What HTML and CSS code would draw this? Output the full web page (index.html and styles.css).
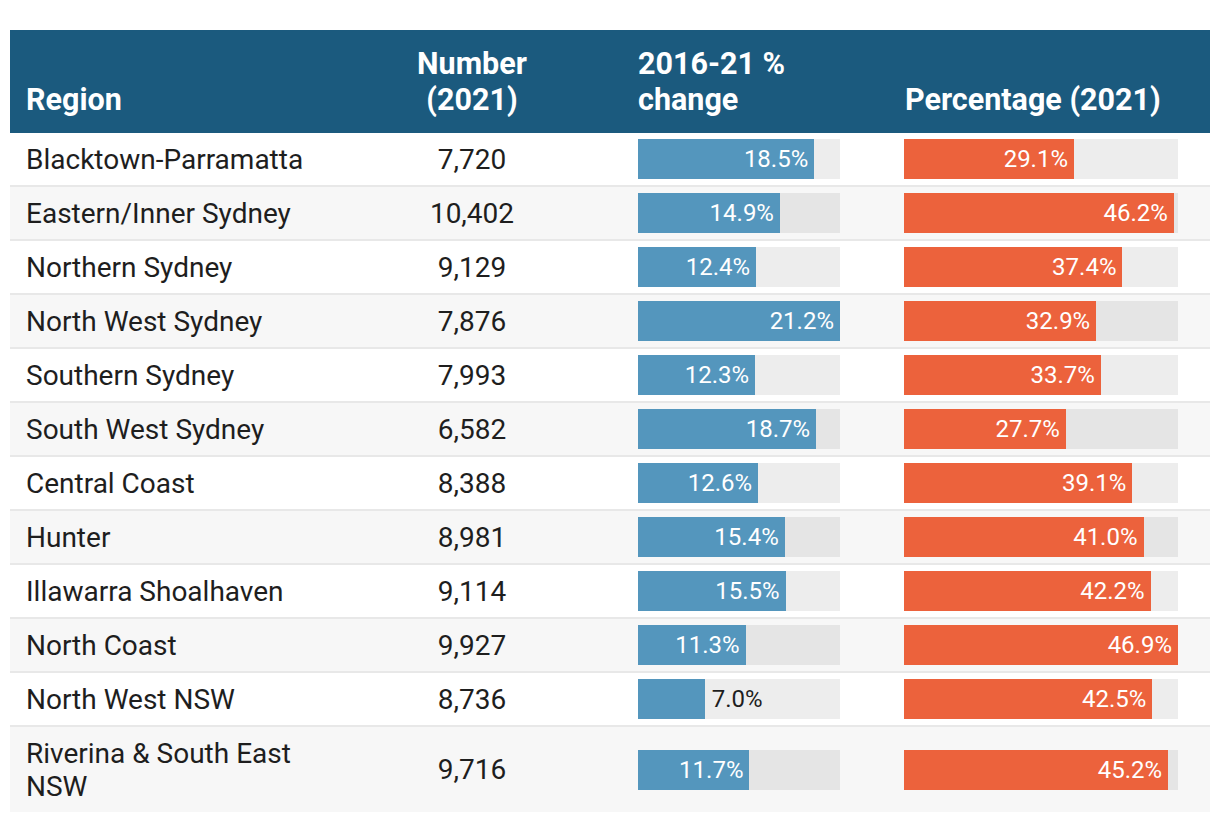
FILE: index.html
```html
<!DOCTYPE html>
<html lang="en">
<head>
<meta charset="utf-8">
<title>Regions</title>
<link rel="stylesheet" href="styles.css">
</head>
<body>
<div class="table">
  <div class="row head">
    <div class="cell region">Region</div>
    <div class="cell num">Number<br>(2021)</div>
    <div class="cell chg">2016-21 %<br>change</div>
    <div class="cell pct">Percentage (2021)</div>
  </div>

  <div class="row">
    <div class="cell region">Blacktown-Parramatta</div>
    <div class="cell num">7,720</div>
    <div class="cell chg"><div class="track"><div class="fill blue" style="width:87.26%">18.5%</div></div></div>
    <div class="cell pct"><div class="track"><div class="fill orange" style="width:62.05%">29.1%</div></div></div>
  </div>
  <div class="row">
    <div class="cell region">Eastern/Inner Sydney</div>
    <div class="cell num">10,402</div>
    <div class="cell chg"><div class="track"><div class="fill blue" style="width:70.28%">14.9%</div></div></div>
    <div class="cell pct"><div class="track"><div class="fill orange" style="width:98.51%">46.2%</div></div></div>
  </div>
  <div class="row">
    <div class="cell region">Northern Sydney</div>
    <div class="cell num">9,129</div>
    <div class="cell chg"><div class="track"><div class="fill blue" style="width:58.49%">12.4%</div></div></div>
    <div class="cell pct"><div class="track"><div class="fill orange" style="width:79.74%">37.4%</div></div></div>
  </div>
  <div class="row">
    <div class="cell region">North West Sydney</div>
    <div class="cell num">7,876</div>
    <div class="cell chg"><div class="track"><div class="fill blue" style="width:100%">21.2%</div></div></div>
    <div class="cell pct"><div class="track"><div class="fill orange" style="width:70.15%">32.9%</div></div></div>
  </div>
  <div class="row">
    <div class="cell region">Southern Sydney</div>
    <div class="cell num">7,993</div>
    <div class="cell chg"><div class="track"><div class="fill blue" style="width:58.02%">12.3%</div></div></div>
    <div class="cell pct"><div class="track"><div class="fill orange" style="width:71.86%">33.7%</div></div></div>
  </div>
  <div class="row">
    <div class="cell region">South West Sydney</div>
    <div class="cell num">6,582</div>
    <div class="cell chg"><div class="track"><div class="fill blue" style="width:88.21%">18.7%</div></div></div>
    <div class="cell pct"><div class="track"><div class="fill orange" style="width:59.06%">27.7%</div></div></div>
  </div>
  <div class="row">
    <div class="cell region">Central Coast</div>
    <div class="cell num">8,388</div>
    <div class="cell chg"><div class="track"><div class="fill blue" style="width:59.43%">12.6%</div></div></div>
    <div class="cell pct"><div class="track"><div class="fill orange" style="width:83.37%">39.1%</div></div></div>
  </div>
  <div class="row">
    <div class="cell region">Hunter</div>
    <div class="cell num">8,981</div>
    <div class="cell chg"><div class="track"><div class="fill blue" style="width:72.64%">15.4%</div></div></div>
    <div class="cell pct"><div class="track"><div class="fill orange" style="width:87.42%">41.0%</div></div></div>
  </div>
  <div class="row">
    <div class="cell region">Illawarra Shoalhaven</div>
    <div class="cell num">9,114</div>
    <div class="cell chg"><div class="track"><div class="fill blue" style="width:73.11%">15.5%</div></div></div>
    <div class="cell pct"><div class="track"><div class="fill orange" style="width:89.98%">42.2%</div></div></div>
  </div>
  <div class="row">
    <div class="cell region">North Coast</div>
    <div class="cell num">9,927</div>
    <div class="cell chg"><div class="track"><div class="fill blue" style="width:53.30%">11.3%</div></div></div>
    <div class="cell pct"><div class="track"><div class="fill orange" style="width:100%">46.9%</div></div></div>
  </div>
  <div class="row">
    <div class="cell region">North West NSW</div>
    <div class="cell num">8,736</div>
    <div class="cell chg"><div class="track"><div class="fill blue" style="width:33.02%"></div><span class="outside">7.0%</span></div></div>
    <div class="cell pct"><div class="track"><div class="fill orange" style="width:90.62%">42.5%</div></div></div>
  </div>
  <div class="row">
    <div class="cell region">Riverina &amp; South East NSW</div>
    <div class="cell num">9,716</div>
    <div class="cell chg"><div class="track"><div class="fill blue" style="width:55.19%">11.7%</div></div></div>
    <div class="cell pct"><div class="track"><div class="fill orange" style="width:96.38%">45.2%</div></div></div>
  </div>
</div>
</body>
</html>
```

FILE: styles.css
```css
html, body {
  margin: 0;
  padding: 0;
  background: #ffffff;
}

body {
  font-family: Roboto, "Liberation Sans", sans-serif;
  color: #1e1e1e;
}

.table {
  width: 1200px;
  margin: 30px 0 0 10px;
}

.row {
  display: grid;
  grid-template-columns: 340px 244px 278px 338px;
  align-items: center;
  border-bottom: 2px solid #e8e8e8;
}

.row:nth-child(odd) {
  background: #f7f7f7;
}

.row:last-child {
  border-bottom: none;
}

.row.head {
  background: #1b5a7e;
  color: #ffffff;
  font-weight: 700;
  align-items: end;
  padding: 16px 0 15px;
  border-bottom: none;
}

.cell {
  font-size: 28px;
  line-height: 33px;
  padding: 9.5px 0;
}

.head .cell {
  font-size: 30.5px;
  line-height: 36px;
  padding: 0;
}

.cell.region {
  padding-left: 16px;
  padding-right: 16px;
}

.cell.num {
  text-align: center;
}

.cell.chg {
  padding: 6px 0 6px 44px;
}

.cell.pct {
  padding: 6px 0 6px 32px;
}

.head .cell.chg {
  padding: 0 0 0 44px;
}

.head .cell.pct {
  padding: 0 0 0 33px;
}

.head .cell.region {
  padding-left: 16px;
}

.track {
  display: flex;
  align-items: center;
  height: 40px;
  background: rgba(0, 0, 0, 0.07);
  font-size: 24px;
  line-height: 40px;
}

.chg .track {
  width: 202px;
}

.pct .track {
  width: 274px;
}

.fill {
  height: 40px;
  box-sizing: border-box;
  text-align: right;
  padding-right: 6px;
  color: #ffffff;
  white-space: nowrap;
}

.fill.blue {
  background: #5496bd;
}

.fill.orange {
  background: #ec623c;
}

.outside {
  margin-left: 7px;
  color: #1e1e1e;
}
```
